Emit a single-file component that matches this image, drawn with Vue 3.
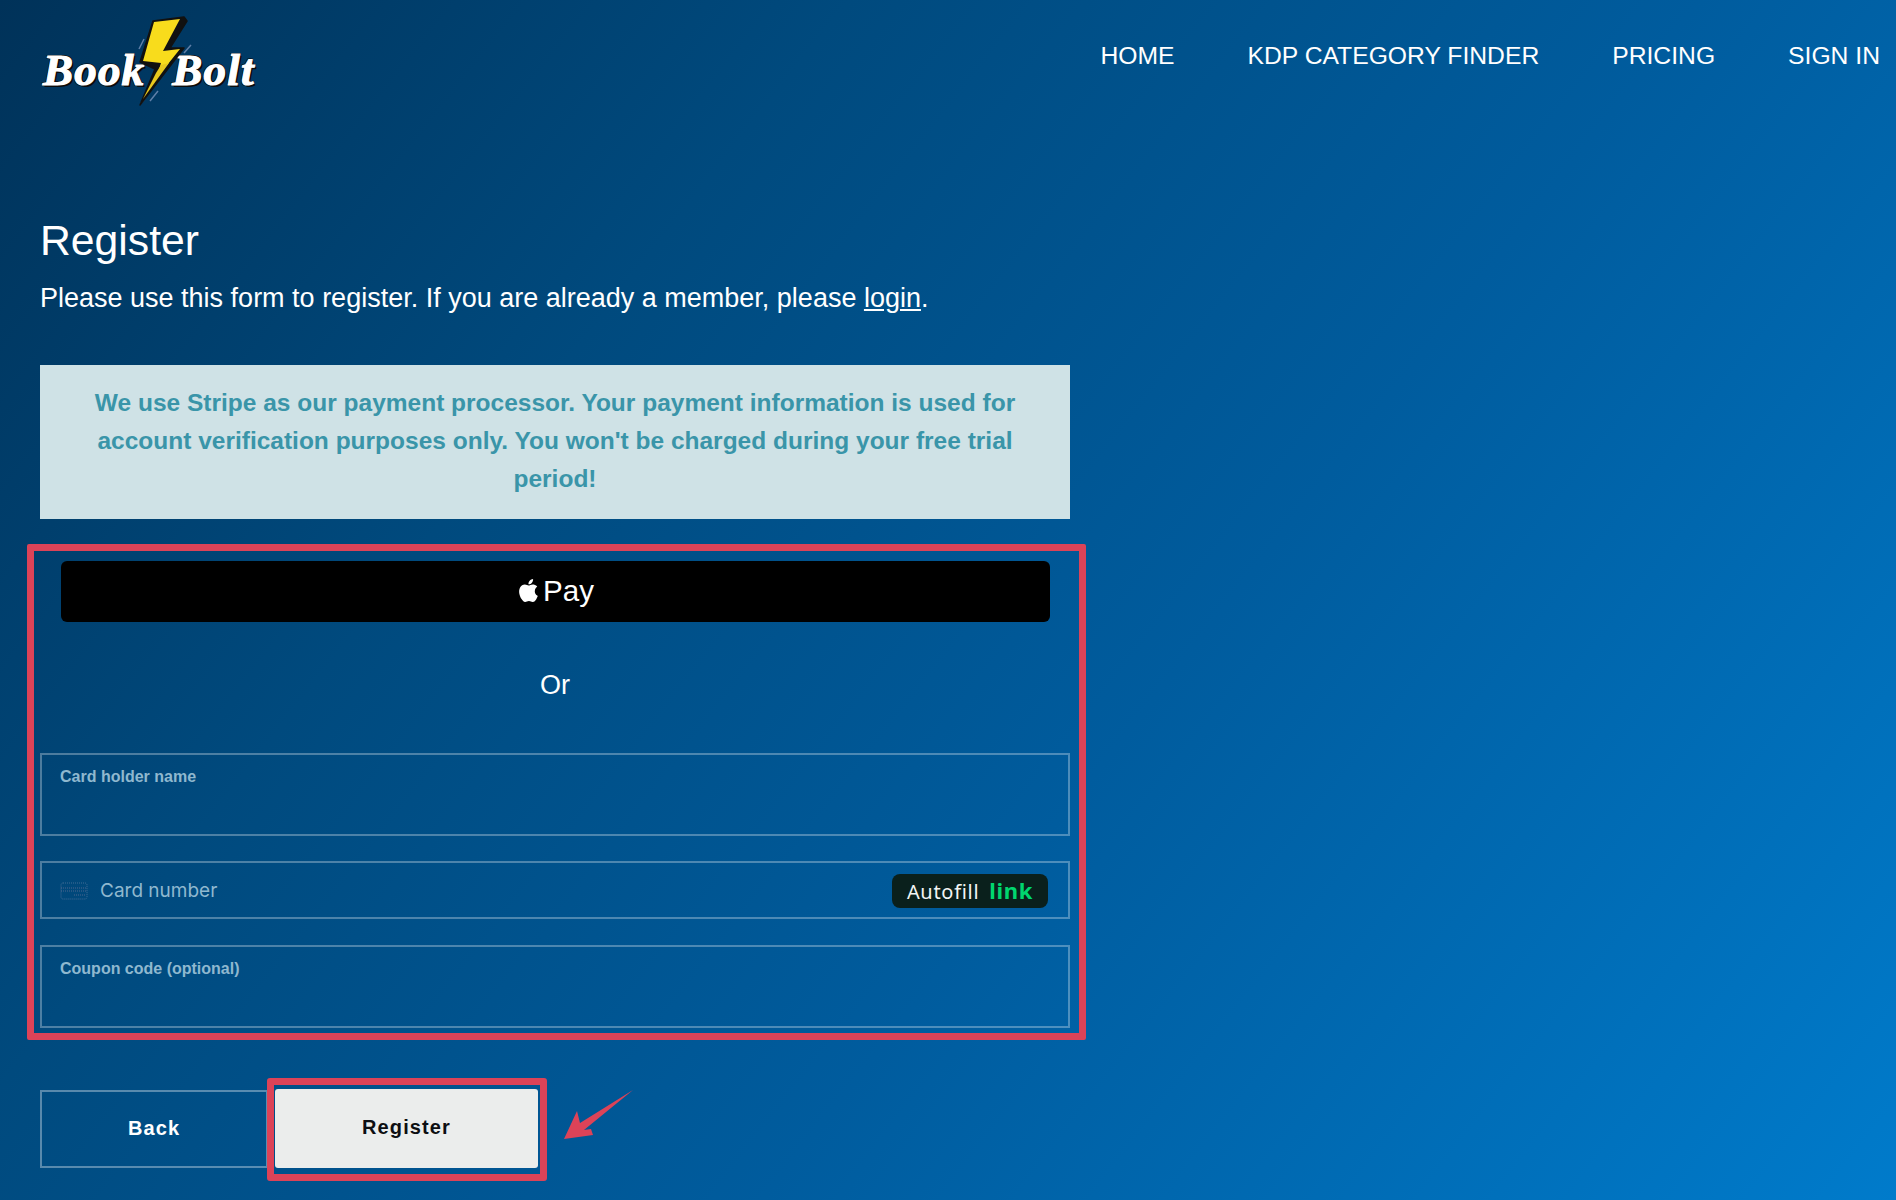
<script setup>
const navLinks = ['HOME', 'KDP CATEGORY FINDER', 'PRICING', 'SIGN IN']
</script>

<template>
  <div class="page">
    <header class="topbar">
      <a class="logo" href="#">
        <span class="logo-word">Book</span>
        <span class="logo-word logo-word-right">Bolt</span>
        <svg class="logo-bolt" width="64" height="92" viewBox="0 0 64 92">
          <path d="M10 24 L5 34 M57 30 L50 38 M12 82 L7 88 M24 76 L16 86" stroke="#5f7fa8" stroke-width="1.5" fill="none" />
          <path d="M19 6 L50 2 L53 6 L36 33 L50 33 L6 90 L21 54 L6 47 Z" fill="#111" stroke="#111" stroke-width="1.5" stroke-linejoin="round" />
          <path d="M20 7 L46 4 L29 36 L46 34 L22 64 L27 48 L9 46 Z" fill="#f8dc1c" />
          <path d="M27 50 L35 48 L9 84 L22 58 Z" fill="#e8c91e" />
        </svg>
      </a>
      <nav class="nav">
        <a v-for="link in navLinks" :key="link" href="#">{{ link }}</a>
      </nav>
    </header>

    <main class="content">
      <h1>Register</h1>
      <p class="intro">Please use this form to register. If you are already a member, please <a href="#">login</a>.</p>

      <div class="alert">
        We use Stripe as our payment processor. Your payment information is used for account verification purposes only. You won't be charged during your free trial period!
      </div>

      <section class="payment">
        <div class="highlight highlight-form"></div>
        <button type="button" class="apple-pay">
          <svg width="23" height="27" viewBox="0 0 24 24" fill="#fff">
            <path d="M12.152 6.896c-.948 0-2.415-1.078-3.96-1.04-2.04.027-3.91 1.183-4.961 3.014-2.117 3.675-.546 9.103 1.519 12.09 1.013 1.454 2.208 3.09 3.792 3.039 1.52-.065 2.09-.987 3.935-.987 1.831 0 2.35.987 3.96.948 1.637-.026 2.676-1.48 3.676-2.948 1.156-1.688 1.636-3.325 1.662-3.415-.039-.013-3.182-1.221-3.22-4.857-.026-3.04 2.48-4.494 2.597-4.559-1.429-2.09-3.623-2.324-4.39-2.376-2-.156-3.675 1.09-4.61 1.09zM15.53 3.83c.843-1.012 1.4-2.427 1.245-3.83-1.207.052-2.662.805-3.532 1.818-.78.896-1.454 2.338-1.273 3.714 1.338.104 2.715-.688 3.559-1.701" />
          </svg>
          <span>Pay</span>
        </button>

        <div class="or">Or</div>

        <div class="field">
          <label>Card holder name</label>
        </div>

        <div class="field field-card">
          <svg class="card-icon" width="28" height="18" viewBox="0 0 28 18" fill="none">
            <rect x="1" y="1" width="26" height="16" rx="2" stroke="#6d86a8" stroke-width="1" stroke-dasharray="1 1" opacity="0.6" />
            <path d="M1 6h26M1 9h26M14 13h11" stroke="#8a7fa0" stroke-width="1" stroke-dasharray="1 1" opacity="0.55" />
          </svg>
          <span class="placeholder">Card number</span>
          <span class="autofill">Autofill <b>link</b></span>
        </div>

        <div class="field">
          <label>Coupon code (optional)</label>
        </div>
      </section>

      <div class="actions">
        <button type="button" class="btn btn-back">Back</button>
        <button type="button" class="btn btn-register">
          Register
          <span class="highlight highlight-btn"></span>
          <svg class="arrow" width="74" height="52" viewBox="0 0 74 52">
            <path d="M71 1 L18 34 L15 22 L2 50 L31 46 L29 40 L22 41 Z" fill="#dc4358" />
          </svg>
        </button>
      </div>
    </main>
  </div>
</template>

<style>
html,
body {
  margin: 0;
}
</style>

<style scoped>
.page {
  position: relative;
  box-sizing: border-box;
  height: 1200px;
  overflow: hidden;
  background: linear-gradient(128deg, #003259 0%, #004a7e 30%, #005c9e 60%, #007bcb 100%);
  color: #fff;
  font-family: 'Liberation Sans', Arial, sans-serif;
}

.topbar {
  display: flex;
  justify-content: space-between;
  align-items: flex-start;
  height: 205px;
  padding: 0 16px 0 43px;
}
.logo {
  position: relative;
  display: flex;
  gap: 27px;
  width: 216px;
  height: 110px;
  padding-top: 46px;
  box-sizing: border-box;
  text-decoration: none;
}
.logo-word {
  position: relative;
  z-index: 1;
  font-family: 'Liberation Serif', 'Times New Roman', serif;
  font-size: 45px;
  font-weight: 700;
  font-style: italic;
  line-height: 48px;
  letter-spacing: 1.2px;
  color: #fff;
  -webkit-text-stroke: 1.2px #fff;
  text-shadow: 2px 2px 0 #0b0b0b, -1px 1px 0 #0b0b0b, 1px -1px 0 #0b0b0b, -1px -1px 0 #0b0b0b;
}
.logo-bolt {
  position: absolute;
  left: 91px;
  top: 15px;
  z-index: 2;
}
.nav {
  display: flex;
  gap: 73px;
  padding-top: 41px;
}
.nav a {
  color: #fff;
  font-size: 24.7px;
  line-height: 30px;
  text-decoration: none;
}

.content {
  width: 1030px;
  margin-left: 40px;
}
h1 {
  margin: 0;
  font-size: 42.7px;
  font-weight: 400;
  line-height: 70px;
}
.intro {
  margin: 5px 0 0;
  font-size: 27px;
  line-height: 36px;
}
.intro a {
  color: #fff;
}
.alert {
  box-sizing: border-box;
  height: 154px;
  margin-top: 49px;
  padding: 19px 40px;
  background: #cfe2e6;
  color: #3a95a9;
  font-size: 24.5px;
  font-weight: 700;
  line-height: 38px;
  text-align: center;
}

.payment {
  position: relative;
  margin-top: 42px;
}
.highlight {
  position: absolute;
  box-sizing: border-box;
  border: 7px solid #dc4358;
  border-radius: 2px;
  pointer-events: none;
}
.highlight-form {
  top: -17px;
  left: -13px;
  right: -16px;
  bottom: -12px;
}
.apple-pay {
  display: flex;
  justify-content: center;
  align-items: center;
  gap: 3px;
  width: 989px;
  height: 61px;
  margin: 0 auto 0 21px;
  padding: 0 0 2px;
  border: 0;
  border-radius: 6px;
  background: #000;
  color: #fff;
  font-family: inherit;
  font-size: 29.5px;
}
.or {
  height: 131px;
  padding-top: 43px;
  box-sizing: border-box;
  font-size: 27px;
  line-height: 40px;
  text-align: center;
}
.field {
  box-sizing: border-box;
  height: 83px;
  margin-bottom: 25px;
  padding: 12px 18px;
  border: 2px solid rgba(255, 255, 255, 0.3);
  font-size: 16px;
  font-weight: 700;
  line-height: 20px;
  color: #8fb8cf;
}
.field:last-child {
  margin-bottom: 0;
}
.field-card {
  display: flex;
  align-items: center;
  height: 58px;
  margin-bottom: 26px;
  padding: 1px 20px 0 18px;
  font-weight: 400;
}
.card-icon {
  margin-right: 12px;
}
.placeholder {
  font-size: 19px;
  font-family: Inter, 'Liberation Sans', sans-serif;
}
.autofill {
  margin-left: auto;
  box-sizing: border-box;
  width: 156px;
  height: 34px;
  border-radius: 8px;
  background: #0a201c;
  color: #f2f5f4;
  font-family: 'Noto Sans', sans-serif;
  font-size: 20px;
  line-height: 32px;
  text-align: center;
  letter-spacing: 0.7px;
}
.autofill b {
  margin-left: 4px;
  color: #00d66f;
  font-size: 22px;
}

.actions {
  display: flex;
  margin-top: 62px;
}
.btn {
  position: relative;
  box-sizing: border-box;
  height: 78px;
  padding: 0 0 2px;
  font-family: 'Liberation Sans', Arial, sans-serif;
  font-size: 20px;
  font-weight: 700;
  letter-spacing: 1.1px;
}
.btn-back {
  width: 228px;
  border: 2px solid rgba(255, 255, 255, 0.35);
  background: transparent;
  color: #fff;
}
.btn-register {
  width: 263px;
  height: 79px;
  margin: -1px 0 0 7px;
  border: 0;
  border-radius: 3px;
  background: #ebedec;
  color: #0d0f12;
}
.highlight-btn {
  top: -11px;
  left: -8px;
  right: -9px;
  bottom: -13px;
  border-radius: 3px;
}
.arrow {
  position: absolute;
  left: 287px;
  top: 0;
}
</style>
